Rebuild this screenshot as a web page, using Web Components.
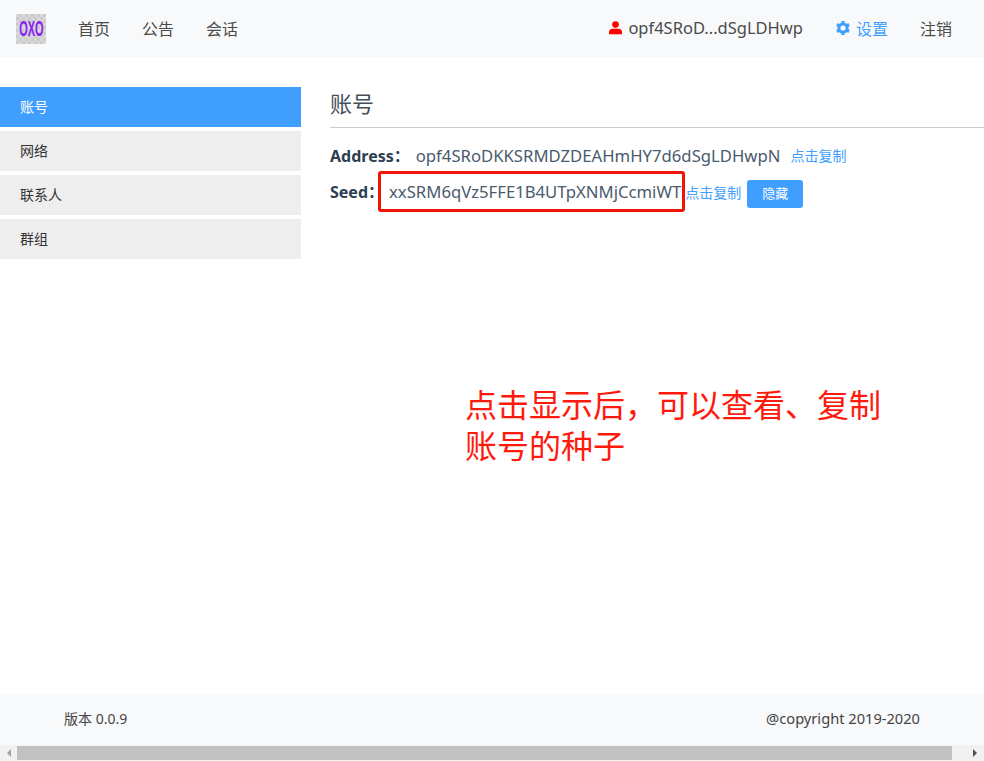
<!DOCTYPE html>
<html lang="zh">
<head>
<meta charset="utf-8">
<title>账号</title>
<style>
  html, body {
    margin: 0;
    height: 100%;
    overflow: hidden;
    font-family: "Noto Sans", "Noto Sans CJK SC", sans-serif;
    color: #2c3e50;
  }
  body {
    display: flex;
    flex-direction: column;
    position: relative;
  }
</style>
</head>
<body>
<app-header></app-header>
<div id="middle" style="flex:1;display:flex;min-height:0">
  <side-menu>
    <menu-item active>账号</menu-item>
    <menu-item>网络</menu-item>
    <menu-item>联系人</menu-item>
    <menu-item>群组</menu-item>
  </side-menu>
  <account-panel
    address="opf4SRoDKKSRMDZDEAHmHY7d6dSgLDHwpN"
    seed="xxSRM6qVz5FFE1B4UTpXNMjCcmiWT"></account-panel>
</div>
<app-footer></app-footer>
<fake-scrollbar></fake-scrollbar>
<call-out></call-out>

<script>
const headerTemplate = document.createElement("template");
headerTemplate.innerHTML = /* html */ `
  <style>
    :host {
      display: flex;
      align-items: center;
      height: 57px;
      box-sizing: border-box;
      flex: none;
      background-color: #f8f9fb;
      padding: 0 32px 2px 16px;
      font-size: 16px;
      color: #4a4a4a;
    }
    .logo {
      width: 30px;
      height: 30px;
      margin: 2px 32px 0 0;
      display: flex;
      align-items: center;
      justify-content: center;
      overflow: hidden;
      background-color: #d4d4d4;
      background-image: conic-gradient(#cbcbcb 25%, #d9d9d9 0 50%, #cbcbcb 0 75%, #d9d9d9 0);
      background-size: 6px 6px;
    }
    .logo span {
      color: #8a1cf5;
      font: 700 22px/30px "Liberation Sans", sans-serif;
      transform: scaleX(.5);
      white-space: nowrap;
    }
    nav { display: flex; gap: 32px; }
    .right { margin-left: auto; display: flex; align-items: center; }
    .user { display: flex; align-items: center; gap: 6px; margin-right: 33px; }
    .user span { font-size: 16.5px; }
    .setting { display: flex; align-items: center; gap: 6px; color: #409eff; margin-right: 32px; }
    svg { display: block; }
  </style>
  <div class="logo"><span>OXO</span></div>
  <nav><span>首页</span><span>公告</span><span>会话</span></nav>
  <div class="right">
    <div class="user">
      <svg width="13" height="14" viewBox="0 0 13 14">
        <circle cx="6.5" cy="3.6" r="3.3" fill="#f00"/>
        <path d="M0 13.2V11c0-1.9 1.5-3.3 3.3-3.3h6.4c1.8 0 3.3 1.4 3.3 3.3v2.2z" fill="#f00"/>
      </svg>
      <span>opf4SRoD...dSgLDHwp</span>
    </div>
    <div class="setting">
      <svg width="14" height="14" viewBox="0 0 14 14">
        <circle cx="7" cy="7" r="4.1" fill="none" stroke="#409eff" stroke-width="3"/>
        <g stroke="#409eff" stroke-width="3.2">
          <path d="M7 0v2.5M7 11.5V14"/>
          <path d="M.9 3.5 3.1 4.7M10.9 9.3l2.2 1.2"/>
          <path d="M.9 10.5 3.1 9.3M10.9 4.7l2.2-1.2"/>
        </g>
      </svg>
      <span>设置</span>
    </div>
    <span>注销</span>
  </div>
`;

class AppHeader extends HTMLElement {
  constructor() {
    super();
    this.attachShadow({ mode: "open" }).appendChild(headerTemplate.content.cloneNode(true));
  }
}
customElements.define("app-header", AppHeader);

const menuTemplate = document.createElement("template");
menuTemplate.innerHTML = /* html */ `
  <style>
    :host {
      display: flex;
      flex-direction: column;
      gap: 4px;
      flex: none;
      width: 301px;
      padding-top: 30px;
      box-sizing: border-box;
    }
  </style>
  <slot></slot>
`;

class SideMenu extends HTMLElement {
  constructor() {
    super();
    this.attachShadow({ mode: "open" }).appendChild(menuTemplate.content.cloneNode(true));
  }
}
customElements.define("side-menu", SideMenu);

const itemTemplate = document.createElement("template");
itemTemplate.innerHTML = /* html */ `
  <style>
    :host {
      display: block;
      height: 40px;
      line-height: 39px;
      padding-left: 20px;
      font-size: 14px;
      color: #333;
      background-color: #eee;
    }
    :host([active]) {
      color: #fff;
      background-color: #409eff;
    }
  </style>
  <slot></slot>
`;

class MenuItem extends HTMLElement {
  constructor() {
    super();
    this.attachShadow({ mode: "open" }).appendChild(itemTemplate.content.cloneNode(true));
  }
}
customElements.define("menu-item", MenuItem);

const panelTemplate = document.createElement("template");
panelTemplate.innerHTML = /* html */ `
  <style>
    :host {
      display: block;
      flex: 1;
      min-width: 0;
      padding: 30px 0 0 29px;
      color: #2c3e50;
    }
    h2 {
      margin: 0 0 10px;
      height: 40px;
      line-height: 33px;
      font-size: 22px;
      font-weight: 400;
      color: #444f5b;
      border-bottom: 1px solid #ccc;
    }
    .row {
      display: flex;
      align-items: center;
      font-size: 16px;
      height: 36px;
      white-space: nowrap;
    }
    b { font-weight: 700; margin-bottom: 2px; }
    .value { color: #4a5b6c; font-size: 16.7px; margin-bottom: 2px; }
    .addr { margin-left: 6px; }
    .seed { margin-left: 5px; }
    a {
      font-size: 14px;
      color: #409eff;
    }
    .addr + a { margin: 0 0 2px 10px; }
    .seed + a { margin-left: 4px; }
    button {
      margin: 4px 0 0 6px;
      width: 56px;
      height: 28px;
      border: 0;
      border-radius: 3px;
      padding: 0 0 3px;
      background-color: #409eff;
      color: #fff;
      font: 13px "Noto Sans", "Noto Sans CJK SC", sans-serif;
    }
  </style>
  <h2>账号</h2>
  <div class="row"><b>Address：</b><span class="value addr"></span><a>点击复制</a></div>
  <div class="row"><b>Seed：</b><span class="value seed"></span><a>点击复制</a><button>隐藏</button></div>
`;

class AccountPanel extends HTMLElement {
  constructor() {
    super();
    this.attachShadow({ mode: "open" }).appendChild(panelTemplate.content.cloneNode(true));
  }

  connectedCallback() {
    this.shadowRoot.querySelector(".addr").textContent = this.getAttribute("address");
    this.shadowRoot.querySelector(".seed").textContent = this.getAttribute("seed");
  }
}
customElements.define("account-panel", AccountPanel);

const footerTemplate = document.createElement("template");
footerTemplate.innerHTML = /* html */ `
  <style>
    :host {
      display: flex;
      justify-content: space-between;
      align-items: center;
      flex: none;
      height: 51px;
      box-sizing: border-box;
      padding: 0 64px 3px;
      font-size: 14px;
      color: #444;
      background-color: #f8f9fb;
    }
    .copy { font-size: 14.65px; }
  </style>
  <span>版本 0.0.9</span>
  <span class="copy">@copyright 2019-2020</span>
`;

class AppFooter extends HTMLElement {
  constructor() {
    super();
    this.attachShadow({ mode: "open" }).appendChild(footerTemplate.content.cloneNode(true));
  }
}
customElements.define("app-footer", AppFooter);

const scrollbarTemplate = document.createElement("template");
scrollbarTemplate.innerHTML = /* html */ `
  <style>
    :host {
      display: flex;
      align-items: center;
      flex: none;
      height: 16px;
      background-color: #f1f1f1;
    }
    .end {
      width: 17px;
      display: flex;
      justify-content: center;
    }
    .end + .thumb + .end { width: 32px; }
    .arrow {
      width: 0;
      height: 0;
      border-style: solid;
      border-color: transparent;
      border-width: 4px 0 4px 4px;
      border-left-color: #505050;
      margin-left: 14px;
    }
    .arrow.left {
      border-width: 4px 4px 4px 0;
      border-right-color: #a3a3a3;
      margin: 0;
    }
    .thumb {
      width: 935px;
      height: 14px;
      margin-top: -1px;
      background-color: #c1c1c1;
    }
  </style>
  <div class="end"><div class="arrow left"></div></div>
  <div class="thumb"></div>
  <div class="end"><div class="arrow"></div></div>
`;

class FakeScrollbar extends HTMLElement {
  constructor() {
    super();
    this.attachShadow({ mode: "open" }).appendChild(scrollbarTemplate.content.cloneNode(true));
  }
}
customElements.define("fake-scrollbar", FakeScrollbar);

// red marks drawn over the screenshot: they lie over other content
const calloutTemplate = document.createElement("template");
calloutTemplate.innerHTML = /* html */ `
  <style>
    :host { display: contents; }
    .box {
      position: absolute;
      left: 378px;
      top: 171px;
      width: 301px;
      height: 35px;
      border: 3px solid #f01408;
      border-radius: 3px;
    }
    .note {
      position: absolute;
      left: 465px;
      top: 383px;
      width: 420px;
      font: 32px/41px "Noto Sans CJK SC", sans-serif;
      color: #ff1a0e;
    }
  </style>
  <div class="box"></div>
  <div class="note">点击显示后，可以查看、复制账号的种子</div>
`;

class CallOut extends HTMLElement {
  constructor() {
    super();
    this.attachShadow({ mode: "open" }).appendChild(calloutTemplate.content.cloneNode(true));
  }
}
customElements.define("call-out", CallOut);
</script>
</body>
</html>
